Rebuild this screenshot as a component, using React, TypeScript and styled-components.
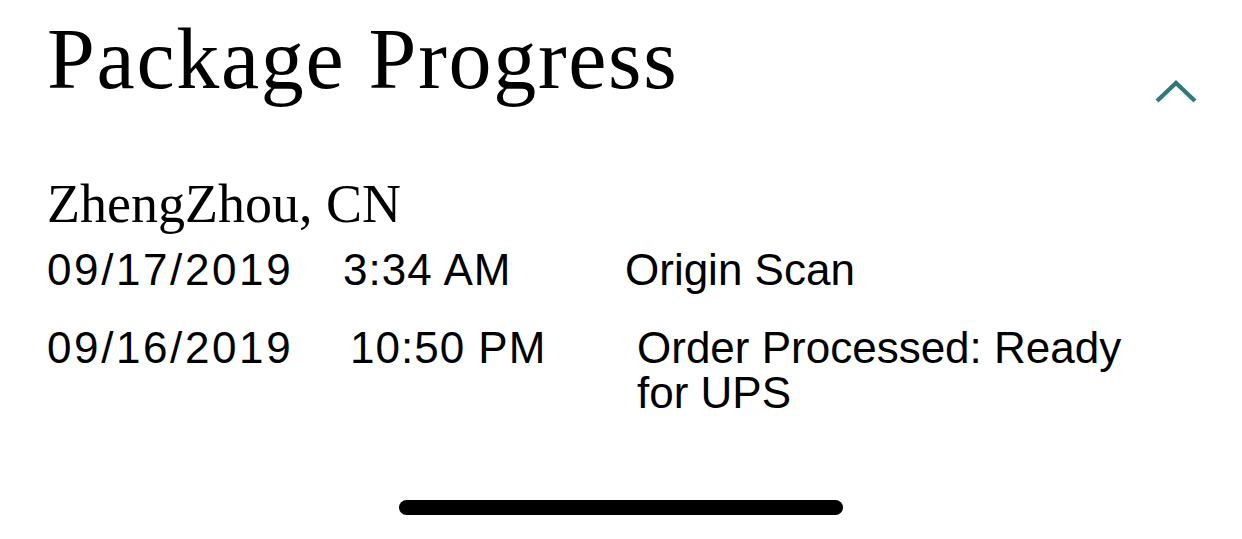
import React from "react";
import styled, { createGlobalStyle } from "styled-components";

interface ScanEvent {
  date: string;
  time: string;
  activity: string;
  cols: string;
}

const events: ScanEvent[] = [
  { date: "09/17/2019", time: "3:34 AM", activity: "Origin Scan", cols: "296px 282px 1fr" },
  {
    date: "09/16/2019",
    time: "10:50 PM",
    activity: "Order Processed: Ready for UPS",
    cols: "303px 287px 1fr",
  },
];

const GlobalStyle = createGlobalStyle`
  html, body {
    margin: 0;
    padding: 0;
    background: #ffffff;
  }
`;

const Screen = styled.div`
  display: flex;
  flex-flow: column;
  min-height: 100vh;
  box-sizing: border-box;
  padding: 10px 44px 0 47px;
  color: #000;
`;

const Header = styled.div`
  display: flex;
  justify-content: space-between;
`;

const Title = styled.h1`
  margin: 0;
  font-family: "Liberation Serif", "Times New Roman", serif;
  font-weight: 400;
  font-size: 86px;
  line-height: 98px;
  letter-spacing: 1.7px;
`;

const Toggle = styled.button`
  align-self: flex-end;
  margin: 0 0 3px;
  padding: 0;
  border: none;
  background: none;
  display: flex;
  cursor: pointer;
`;

const Location = styled.h2`
  margin: 66px 0 13px;
  font-family: "Liberation Serif", "Times New Roman", serif;
  font-weight: 400;
  font-size: 54px;
  line-height: 60px;
`;

const Row = styled.div<{ $cols: string }>`
  display: grid;
  grid-template-columns: ${(p) => p.$cols};
  font-family: "Liberation Sans", Arial, sans-serif;
  font-size: 44px;
  line-height: 45px;

  & + & {
    margin-top: 33px;
  }
`;

const DateCell = styled.span`
  letter-spacing: 2.6px;
`;

const TimeCell = styled.span`
  letter-spacing: 1px;
`;

const Activity = styled.span`
  max-width: 500px;
`;

const HomeIndicator = styled.div`
  align-self: center;
  margin: auto 0 24px -3px;
  width: 444px;
  height: 15px;
  border-radius: 8px;
  background: #000;
`;

const ChevronUp = () => (
  <svg width="44" height="26" viewBox="0 0 44 26" fill="none">
    <polyline points="3,22 22,4 41,22" stroke="#2f7a78" strokeWidth="4.2" />
  </svg>
);

const App = () => {
  return (
    <>
      <GlobalStyle />
      <Screen>
        <Header>
          <Title>Package Progress</Title>
          <Toggle aria-label="Collapse">
            <ChevronUp />
          </Toggle>
        </Header>
        <Location>ZhengZhou, CN</Location>
        {events.map((e) => (
          <Row key={e.date + e.time} $cols={e.cols}>
            <DateCell>{e.date}</DateCell>
            <TimeCell>{e.time}</TimeCell>
            <Activity>{e.activity}</Activity>
          </Row>
        ))}
        <HomeIndicator />
      </Screen>
    </>
  );
};

export default App;
